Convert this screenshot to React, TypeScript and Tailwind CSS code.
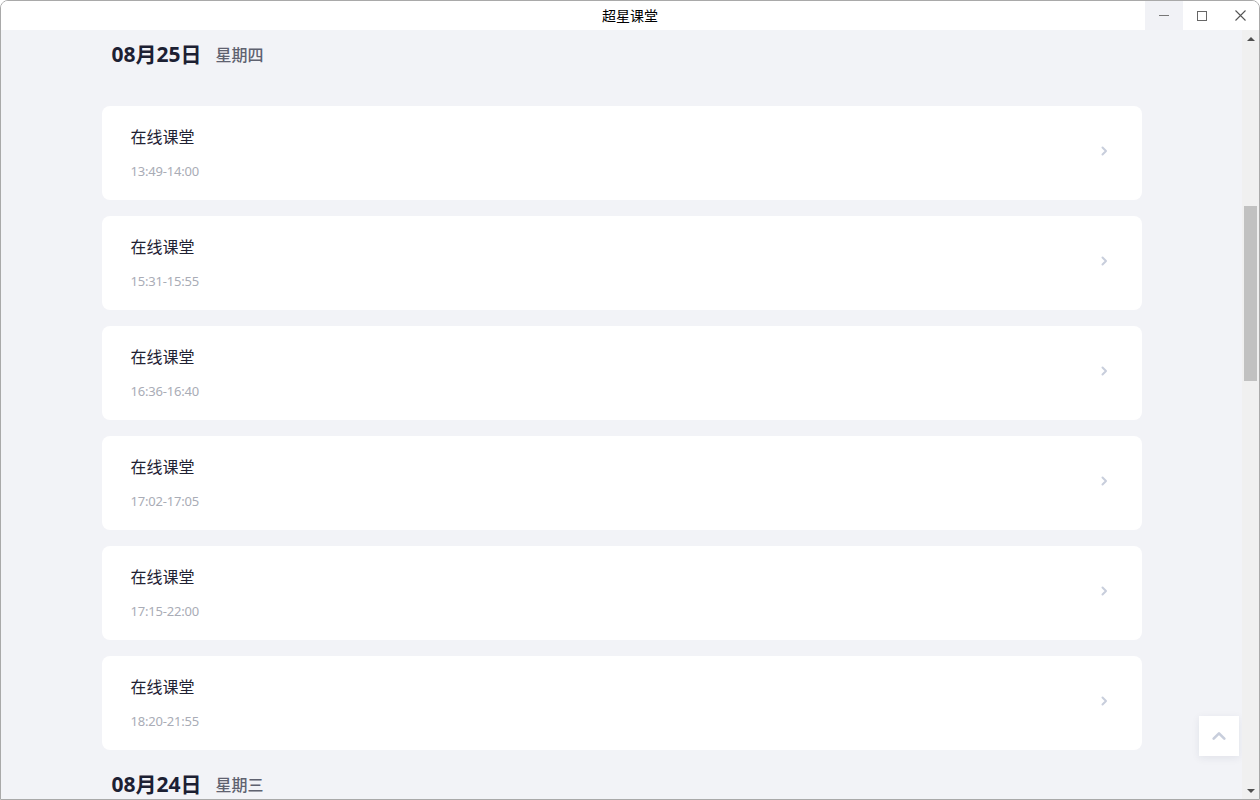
import React from "react";

type Lesson = { title: string; time: string };

const groups: { date: string; week: string; lessons: Lesson[] }[] = [
  {
    date: "08月25日",
    week: "星期四",
    lessons: [
      { title: "在线课堂", time: "13:49-14:00" },
      { title: "在线课堂", time: "15:31-15:55" },
      { title: "在线课堂", time: "16:36-16:40" },
      { title: "在线课堂", time: "17:02-17:05" },
      { title: "在线课堂", time: "17:15-22:00" },
      { title: "在线课堂", time: "18:20-21:55" },
    ],
  },
  {
    date: "08月24日",
    week: "星期三",
    lessons: [{ title: "在线课堂", time: "09:00-10:00" }],
  },
];

const font = { fontFamily: '"Noto Sans", "Noto Sans CJK SC", sans-serif' };

const Chevron: React.FC<{ up?: boolean; className?: string }> = ({ up, className }) => (
  <svg
    width="12"
    height="12"
    viewBox="0 0 12 12"
    className={className}
    fill="none"
    stroke="currentColor"
    strokeWidth="2"
    strokeLinecap="round"
    strokeLinejoin="round"
  >
    {up ? <path d="M2 8 L6 4 L10 8" /> : <path d="M4.5 2.5 L8 6 L4.5 9.5" />}
  </svg>
);

const TitleBar: React.FC = () => (
  <div className="relative h-[29px] bg-white flex items-center justify-center shrink-0">
    <span className="text-[14px] text-black">超星课堂</span>
    <div className="absolute right-0 top-0 h-[29px] flex">
      <div className="w-[38px] h-full bg-[#f1f2f6] flex items-center justify-center">
        <div className="w-[10px] h-px bg-[#777]" />
      </div>
      <div className="w-[38px] h-full flex items-center justify-center">
        <div className="w-[10px] h-[10px] border border-[#666]" />
      </div>
      <div className="w-[38px] h-full flex items-center justify-center">
        <svg width="11" height="11" viewBox="0 0 11 11" stroke="#555" strokeWidth="1.1">
          <path d="M0.5 0.5 L10.5 10.5 M10.5 0.5 L0.5 10.5" />
        </svg>
      </div>
    </div>
  </div>
);

const LessonCard: React.FC<{ lesson: Lesson }> = ({ lesson }) => (
  <div className="h-[94px] bg-white rounded-lg flex items-center justify-between pl-[29px] pr-[32px]">
    <div className="flex flex-col">
      <span className="text-[16px] leading-[24px] text-[#1f2233]">{lesson.title}</span>
      <span className="mt-[12px] text-[13px] leading-[20px] text-[#a9acb6] tracking-[-0.2px]">{lesson.time}</span>
    </div>
    <Chevron className="text-[#c8cedc] mb-[4px]" />
  </div>
);

const Scrollbar: React.FC = () => (
  <div className="w-[17px] bg-[#f0f0f0] flex flex-col items-center shrink-0">
    <div className="h-[17px] flex items-center justify-center">
      <div className="w-0 h-0 border-l-[4px] border-r-[4px] border-b-[4px] border-l-transparent border-r-transparent border-b-[#505050]" />
    </div>
    <div className="h-[159px]" />
    <div className="w-[13px] h-[175px] bg-[#c1c1c1]" />
    <div className="flex-1" />
    <div className="h-[17px] flex items-center justify-center">
      <div className="w-0 h-0 border-l-[4px] border-r-[4px] border-t-[4px] border-l-transparent border-r-transparent border-t-[#505050]" />
    </div>
  </div>
);

export default function App() {
  return (
    <div style={font} className="w-[1260px] h-[800px] overflow-hidden bg-white">
      <div className="w-full h-full border border-[#a9a9a9] rounded-t-[8px] overflow-hidden flex flex-col">
        <TitleBar />
        <div className="flex-1 flex min-h-0">
          <div className="relative flex-1 bg-[#f2f3f7] overflow-hidden">
            <div className="w-[1040px] mx-auto">
              {groups.map((g, gi) => (
                <div key={g.date} className={gi === 0 ? "pt-[11px]" : "pt-[21px]"}>
                  <div className="h-[28px] pl-[10px] flex items-center gap-[14px] mb-[37px]">
                    <span className="text-[21px] font-bold text-[#1c2033]">{g.date}</span>
                    <span className="text-[16px] font-medium text-[#5f6270]">{g.week}</span>
                  </div>
                  <div className="flex flex-col gap-[16px]">
                    {g.lessons.map((l, i) => (
                      <LessonCard key={i} lesson={l} />
                    ))}
                  </div>
                </div>
              ))}
            </div>
            <div className="absolute right-[3px] bottom-[43px] w-[40px] h-[40px] bg-white shadow-[0_2px_8px_rgba(30,40,80,0.08)] flex items-center justify-center">
              <Chevron up className="text-[#c8cedc] w-[16px] h-[16px]" />
            </div>
          </div>
          <Scrollbar />
        </div>
      </div>
    </div>
  );
}
